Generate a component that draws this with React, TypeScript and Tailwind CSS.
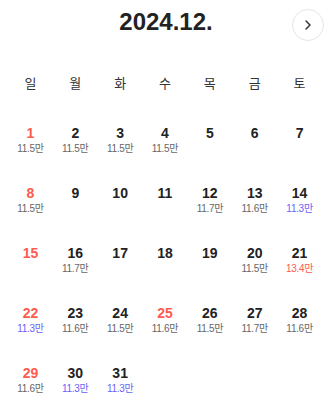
import { ChevronRight } from "lucide-react";

type Day = { d: number; price?: string; tone?: "low" | "high" };

const days: Day[] = [
    { d: 1, price: "11.5만" }, { d: 2, price: "11.5만" }, { d: 3, price: "11.5만" }, { d: 4, price: "11.5만" },
    { d: 5 }, { d: 6 }, { d: 7 },
    { d: 8, price: "11.5만" }, { d: 9 }, { d: 10 }, { d: 11 },
    { d: 12, price: "11.7만" }, { d: 13, price: "11.6만" }, { d: 14, price: "11.3만", tone: "low" },
    { d: 15 }, { d: 16, price: "11.7만" }, { d: 17 }, { d: 18 }, { d: 19 },
    { d: 20, price: "11.5만" }, { d: 21, price: "13.4만", tone: "high" },
    { d: 22, price: "11.3만", tone: "low" }, { d: 23, price: "11.6만" }, { d: 24, price: "11.5만" },
    { d: 25, price: "11.6만" }, { d: 26, price: "11.5만" }, { d: 27, price: "11.7만" }, { d: 28, price: "11.6만" },
    { d: 29, price: "11.6만" }, { d: 30, price: "11.3만", tone: "low" }, { d: 31, price: "11.3만", tone: "low" },
];

const weekdays = ["일", "월", "화", "수", "목", "금", "토"];
const holidays = [25];

function DayCell({ day, index }: { day: Day; index: number }) {
    const red = index % 7 === 0 || holidays.includes(day.d);
    const priceColor =
        day.tone === "low" ? "text-[#6a63f6]" : day.tone === "high" ? "text-[#ff5a4e]" : "text-[#666666]";

    return (
        <div className="h-[60px] flex flex-col items-center">
            <div className={`text-[14px] leading-5 font-bold ${red ? "text-[#ff5a4e]" : "text-[#222222]"}`}>{day.d}</div>
            {day.price && (
                <div className={`text-[10px] leading-3 tracking-[-0.3px] ${priceColor}`}>{day.price}</div>
            )}
        </div>
    );
}

export default function App() {
    return (
        <div
            className="w-[330px] bg-white px-2"
            style={{ fontFamily: '"Liberation Sans", "Noto Sans CJK KR", sans-serif' }}
        >
            <div className="h-[44px] grid grid-cols-[32px_1fr_32px] items-center pr-0 -mr-[2px]">
                <div />
                <div className="text-center text-[24px] font-bold text-[#222222] leading-none">2024.12.</div>
                <button className="w-[32px] h-[32px] mt-[5px] rounded-full border border-[#e3e6e8] bg-white flex items-center justify-center">
                    <ChevronRight size={16} strokeWidth={2.2} className="text-[#333333]" />
                </button>
            </div>

            <div className="mt-[30px] grid grid-cols-7 h-5 items-center">
                {weekdays.map((w) => (
                    <div key={w} className="text-center text-[13px] text-[#333333]">{w}</div>
                ))}
            </div>

            <div className="mt-[29px] grid grid-cols-7">
                {days.map((day, i) => (
                    <DayCell key={day.d} day={day} index={i} />
                ))}
            </div>
        </div>
    );
}
